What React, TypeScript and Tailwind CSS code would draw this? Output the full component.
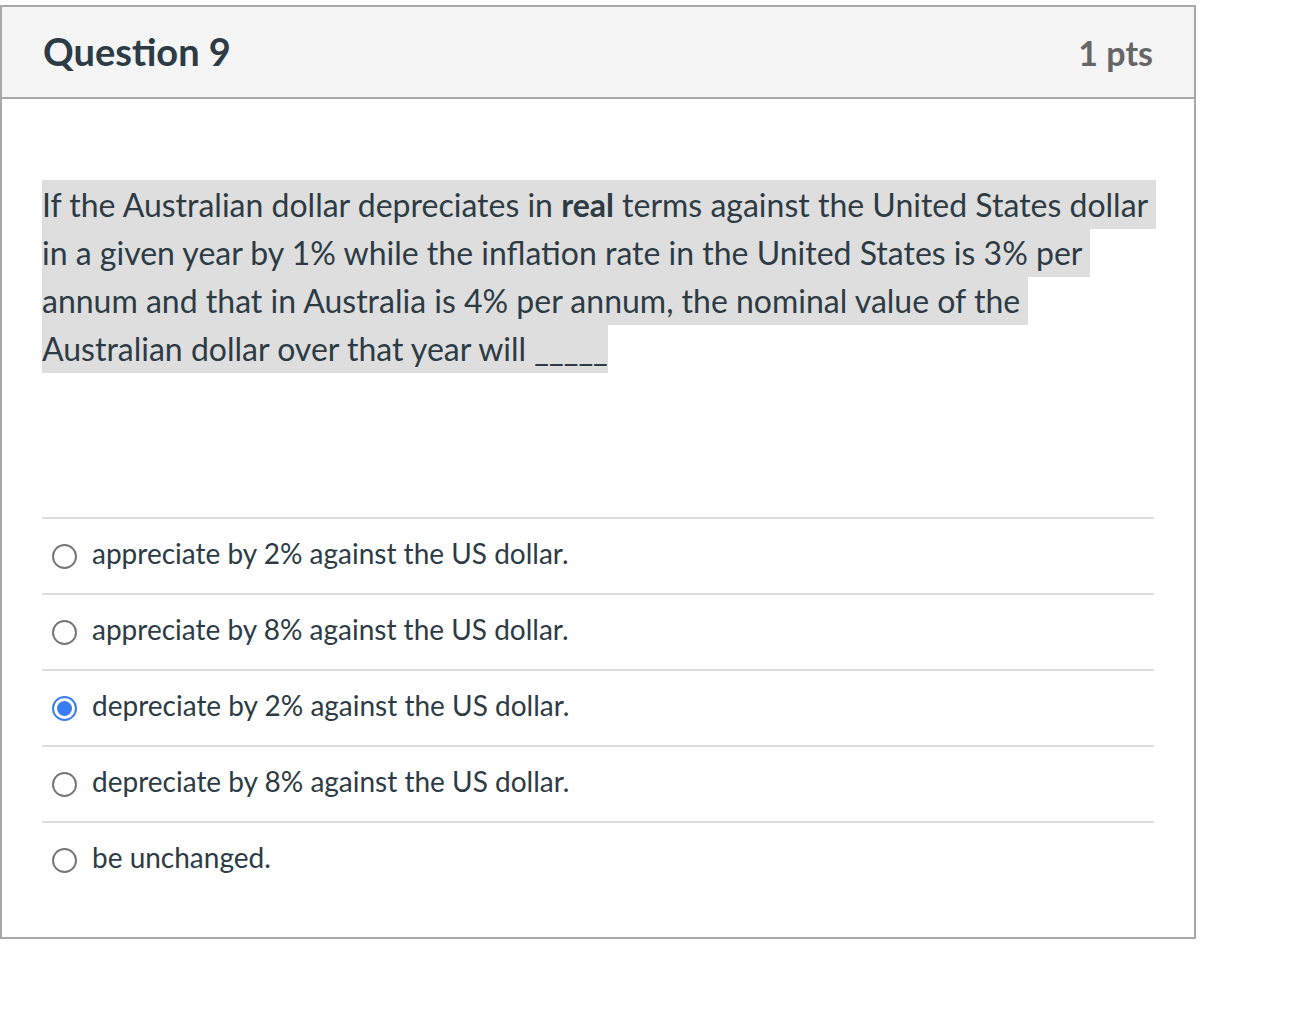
const answers = [
  { id: "a", label: "appreciate by 2% against the US dollar.", checked: false },
  { id: "b", label: "appreciate by 8% against the US dollar.", checked: false },
  { id: "c", label: "depreciate by 2% against the US dollar.", checked: true },
  { id: "d", label: "depreciate by 8% against the US dollar.", checked: false },
  { id: "e", label: "be unchanged.", checked: false },
];

function Radio({ checked }: { checked: boolean }) {
  if (checked) {
    return (
      <span className="flex h-[25px] w-[25px] shrink-0 items-center justify-center rounded-full border-2 border-[#3a7cf4] bg-white">
        <span className="h-[15px] w-[15px] rounded-full bg-[#3a7cf4]" />
      </span>
    );
  }
  return <span className="h-[25px] w-[25px] shrink-0 rounded-full border-2 border-[#767676] bg-white" />;
}

export default function App() {
  return (
    <div className="min-h-screen bg-white pt-[5px] font-['Lato',sans-serif] text-[#2d3b45]">
      <div className="w-[1196px] border-2 border-[#a8a8a8]">
        <div className="flex h-[92px] items-center justify-between border-b-2 border-[#a8a8a8] bg-[#f5f5f5] px-[41px]">
          <h2 className="pb-[2px] text-[38px] font-bold leading-none">Question 9</h2>
          <span className="text-[34px] font-bold text-[#666]">1 pts</span>
        </div>
        <div className="px-[40px] pb-[40px] pt-[82px]">
          <p className="w-[1120px] text-[32px] leading-[48px]">
            <span className="bg-[#dedede] py-[5px]">
              If the Australian dollar depreciates in <strong className="font-bold">real</strong> terms against the United
              States dollar{"\u00a0"}
              <br />
              in a given year by 1% while the inflation rate in the United States is 3% per{"\u00a0"}
              <br />
              annum and that in Australia is 4% per annum, the nominal value of the{"\u00a0"}
              <br />
              Australian dollar over that year will _____
            </span>
          </p>
          <div className="mt-[144px]">
            {answers.map((a) => (
              <label
                key={a.id}
                className="flex h-[76px] cursor-pointer items-center gap-[15px] border-t-2 border-[#dcdcdc] pl-[10px]"
              >
                <Radio checked={a.checked} />
                <span className="pb-[6px] text-[28px] leading-none">{a.label}</span>
              </label>
            ))}
          </div>
        </div>
      </div>
    </div>
  );
}
